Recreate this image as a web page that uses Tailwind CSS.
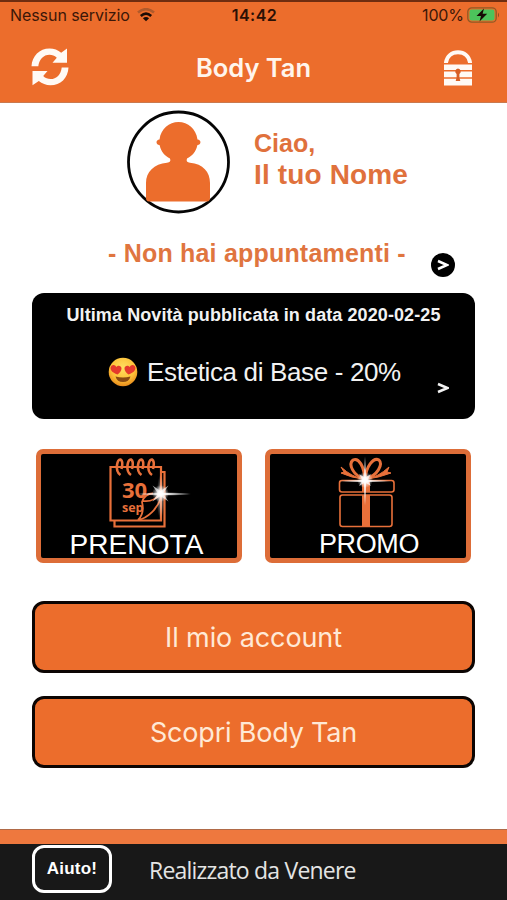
<!DOCTYPE html>
<html lang="it">
<head>
<meta charset="utf-8">
<title>Body Tan</title>
<script src="https://cdn.jsdelivr.net/npm/@tailwindcss/browser@4"></script>
</head>
<body class="bg-white">
<div class="w-[507px] h-[900px] flex flex-col overflow-hidden bg-white font-['Liberation_Sans',sans-serif] whitespace-nowrap">
  <header class="h-[103px] shrink-0 bg-[#ec6d2c] border-t-2 border-t-[#6f2d10] border-b border-b-[#c9794f] font-['Inter',sans-serif]">
    <div class="h-[26px] grid grid-cols-3 items-center pl-[10px] pr-[7px] text-[#3b1708] text-[16px] leading-none">
      <div class="flex items-center gap-[7px]">
        <span class="tracking-[-0.07px]">Nessun servizio</span>
        <svg width="18" height="14" viewBox="0 0 18 14" fill="none" stroke-width="2.6">
          <path d="M1 4.6Q9-2.2 17 4.6" stroke="#b05a2b"/>
          <path d="M3.8 8Q9 3.4 14.2 8" stroke="#1c0c05"/>
          <path d="M9 13.2L5.9 10.2Q9 7.8 12.1 10.2Z" fill="#1c0c05"/>
        </svg>
      </div>
      <span class="text-center font-semibold text-[#2a1005] tracking-[0.5px] -ml-[1px]">14:42</span>
      <div class="flex items-center justify-end gap-[3px]">
        <span class="tracking-[-0.1px]">100%</span>
        <svg width="33" height="16" viewBox="0 0 33 16">
          <rect x=".8" y=".8" width="28.4" height="14.4" rx="4" fill="none" stroke="#8f5a25" stroke-width="1.3"/>
          <rect x="2.5" y="2.5" width="25" height="11" rx="2.3" fill="#4cc35b"/>
          <path d="M17 1.5L9.5 9H14L12.5 14.5L20.2 6.8H15.6Z" fill="#160b05"/>
          <path d="M31 5.5Q33 8 31 10.5Z" fill="#8f4a22"/>
        </svg>
      </div>
    </div>
    <div class="h-[74px] flex items-center justify-between pl-[31px] pr-[34px]">
      <svg class="mt-[4px]" width="38" height="38" viewBox="0 0 38 38" fill="#fffaf5">
        <path d="M.5 18.3C1 8 8.500 .5 18.500 .5C23 .5 27 2 30.200 4.700L36 .5V14.800H21.500L25.800 9.700C23.500 7.500 21.300 6.700 18.500 6.700C12.500 6.700 8 11.500 7.300 18.300Z"/>
        <path d="M37.500 19.400C37 30 29.500 37.300 19.500 37.300C15 37.300 11 35.800 7.800 33.100L1.500 37.300V23H16.500L12.200 28.100C14.500 30.300 16.700 31.100 19.500 31.100C25.500 31.100 30 26.200 30.700 19.400Z"/>
      </svg>
      <h1 class="mt-[6px] mr-[5px] font-semibold text-[25.500px] leading-none text-[#fff5ec] tracking-[0px]">Body Tan</h1>
      <svg class="mt-[5px]" width="30" height="36" viewBox="0 0 30 36">
        <path d="M3 13V12.500C4 6 8.800 2.200 15 2.200S26 6 27 12.500V13" fill="none" stroke="#fffaf5" stroke-width="4"/>
        <path d="M1 14.500H29V20H1ZM1 21.500H29V27.300H1ZM1 28.800H29V35.500H1Z" fill="#fffaf5"/>
        <path d="M15 18.500A3 3 0 0 1 16.400 24V27.500L17.300 31H12.700L13.600 27.500V24A3 3 0 0 1 15 18.500Z" fill="#d85f25"/>
      </svg>
    </div>
  </header>

  <main class="flex-1 flex flex-col">
    <section class="mt-[7px] ml-[127px] flex items-center gap-[24px]">
      <svg width="103" height="104" viewBox="0 0 103 104">
        <circle cx="51.500" cy="52" r="50" fill="#fff" stroke="#050505" stroke-width="2.800"/>
        <path d="M51.500 12C61 12 69 18.500 70.500 29.500C74.500 30 74.500 34.500 70.300 35.300C69 42 65 46 60 48.500C59 51 60 52.500 63 52.800C76 54 83 62 83 73V88C83 90 82 91.500 80 91.500H22C20 91.500 19 90 19 88V73C19 62 27 54 40 52.800C43 52.500 44 51 43 48.500C38 46 34 42 32.700 35.300C28.500 34.500 28.500 30 32.500 29.500C34 18.500 42 12 51.500 12Z" fill="#ec6d2c"/>
      </svg>
      <div class="font-bold text-[#e0713c] leading-[31px] pb-[7px]">
        <p class="text-[25px] tracking-[0px]">Ciao,</p>
        <p class="text-[28px] tracking-[0.150px]">Il tuo Nome</p>
      </div>
    </section>

    <section class="mt-[26px] h-[37px] flex justify-between pl-[108px] pr-[52px]">
      <p class="font-bold text-[25px] leading-[26px] text-[#e0753f] tracking-[0.2px]">- Non hai appuntamenti -</p>
      <span class="mt-[13px] size-[24px] rounded-full bg-black flex items-center justify-center">
        <svg width="12" height="12" viewBox="0 0 12 12" fill="none" stroke="#fff" stroke-width="2.500"><path d="M1 2L10 6L1 10"/></svg>
      </span>
    </section>

    <section class="mt-[16px] mx-[32px] h-[126px] rounded-[12px] bg-black text-[#f2f2f2] flex flex-col relative">
      <h2 class="mt-[12px] text-center font-bold text-[18px] leading-[20px] tracking-[0.090px]">Ultima Novità pubblicata in data 2020-02-25</h2>
      <div class="mt-[32px] ml-[76px] flex items-center gap-[9px] h-[30px]">
        <svg width="30" height="30" viewBox="0 0 30 30">
          <defs><radialGradient id="face" cx=".5" cy=".35" r=".65"><stop offset="0" stop-color="#ffe061"/><stop offset=".65" stop-color="#fdc037"/><stop offset="1" stop-color="#e88a1b"/></radialGradient></defs>
          <circle cx="15" cy="15" r="14.300" fill="url(#face)"/>
          <path d="M7.500 19.500Q15 21.500 22.500 19.500Q21 25 15 25T7.500 19.500Z" fill="#8a4a12"/>
          <path d="M9.500 17.500C4 15.500 1.500 12.500 3 9.500C4.500 7 7.500 7.700 8.300 10C10 7.700 13.300 8.500 13.500 11.300C13.600 13.700 11.700 16 9.500 17.500Z" fill="#e53a2c"/>
          <path d="M20.500 17.500C26 15.500 28.500 12.500 27 9.500C25.500 7 22.500 7.700 21.700 10C20 7.700 16.700 8.500 16.500 11.300C16.400 13.700 18.300 16 20.500 17.500Z" fill="#e53a2c"/>
        </svg>
        <p class="text-[26px] leading-none tracking-[-0.350px]">Estetica di Base - 20%</p>
      </div>
      <svg class="absolute right-[26px] bottom-[25px]" width="12" height="12" viewBox="0 0 12 12" fill="none" stroke="#f2f2f2" stroke-width="2.500"><path d="M1 2L10.500 6L1 10"/></svg>
    </section>

    <section class="mt-[30px] ml-[36px] flex gap-[23px]">
      <a class="w-[206px] h-[114px] rounded-[7px] border-[5px] border-[#dd6d38] bg-black flex flex-col items-center">
        <svg class="shrink-0" width="196" height="76" viewBox="0 0 196 76" fill="none">
          <defs>
            <radialGradient id="glow"><stop offset="0" stop-color="#fff"/><stop offset=".3" stop-color="#fff" stop-opacity=".9"/><stop offset="1" stop-color="#fff" stop-opacity="0"/></radialGradient>
          </defs>
          <g stroke="#e8703a">
            <path d="M69.500 13H120V66.500H69.500ZM73.500 67V72.500H123.500V18H121" stroke-width="2.200"/>
            <path d="M97 66C107 64 116 55 120 44M97 66C103 60 102 52 101 48C103 42 107 39.500 112 39.500M102 47C109 48 115 45 119 40C120 34 120 30 120 25" stroke-width="1.800"/>
            <path d="M79.500 21Q75 18 76 11Q77 5 79.500 5.500Q82.500 7 80.500 15M90 21Q85.500 18 86.500 11Q87.500 5 90 5.500Q93 7 91 15M100.500 21Q96 18 97 11Q98 5 100.500 5.500Q103.500 7 101.500 15M111 21Q106.500 18 107.500 11Q108.500 5 111 5.500Q114 7 112 15" stroke-width="2.600"/>
          </g>
          <text x="81" y="43.500" font-family="Open Sans, sans-serif" font-weight="700" font-size="22" fill="#e8703a">30</text>
          <text x="81" y="57.500" font-family="Open Sans, sans-serif" font-weight="700" font-size="12.500" fill="#e8703a">sep</text>
          <ellipse cx="119.500" cy="43" rx="4" ry="22" fill="url(#glow)" opacity=".5"/>
          <ellipse cx="123" cy="40" rx="28" ry="1.800" fill="url(#glow)"/>
          <circle cx="119.500" cy="39.500" r="8.500" fill="url(#glow)"/>
          <path d="M119.500 39.500m-8-8l8 5.500 8-5.500-5.500 8 5.500 8-8-5.500-8 5.500 5.500-8Z" fill="#fff" opacity=".65"/>
        </svg>
        <span class="text-white text-[28px] leading-[30px] tracking-[0.100px] mr-[5px]">PRENOTA</span>
      </a>
      <a class="w-[206px] h-[114px] rounded-[7px] border-[5px] border-[#dd6d38] bg-black flex flex-col items-center">
        <svg class="shrink-0" width="196" height="76" viewBox="0 0 196 76" fill="none" stroke="#e8703a">
          <g stroke-width="1.600">
            <rect x="69.500" y="26.500" width="54.500" height="11.500" rx="2.500"/>
            <rect x="70" y="41" width="52" height="31.500" rx="2.500"/>
          </g>
          <path d="M92 27H100V38H92ZM92 41H100V72H92Z" fill="#e8703a" stroke="none"/>
          <path d="M95 25C83 22 78 10 83 6C89 3 94 13 95 25C96 13 103 3 109 6C113 10 108 22 95 25Z" stroke-width="3"/>
          <path d="M93 25Q82 23 71 13L74 18L71 19Q82 24 93 25ZM97 25Q108 23 119 13L117 18L121 19Q108 24 97 25Z" fill="#e8703a" stroke-width="1"/>
          <g stroke="none">
            <ellipse cx="95" cy="27" rx="1.600" ry="26" fill="url(#glow)"/>
            <ellipse cx="95" cy="27" rx="27" ry="1.500" fill="url(#glow)"/>
            <circle cx="95" cy="26" r="8" fill="url(#glow)"/>
            <path d="M95 26m-6-6l6 3.500 6-3.500-3.500 6 3.500 6-6-3.500-6 3.500 3.500-6Z" fill="#fff" opacity=".7"/>
          </g>
        </svg>
        <span class="text-white text-[27px] leading-[28px] tracking-[-0.400px] ml-[2px]">PROMO</span>
      </a>
    </section>

    <nav class="mt-[38px] mx-[32px] flex flex-col gap-[23px] font-['Inter',sans-serif] text-[27px] text-[#ffe9d6]">
      <a class="h-[72px] rounded-[12px] border-[3px] border-[#0c0503] bg-[#ec6d2c] flex items-center justify-center tracking-[-0.100px] pt-[2px]">Il mio account</a>
      <a class="h-[72px] rounded-[12px] border-[3px] border-[#0c0503] bg-[#ec6d2c] flex items-center justify-center tracking-[-0.200px] pt-[2px]">Scopri Body Tan</a>
    </nav>
  </main>

  <footer class="h-[71px] shrink-0 bg-[#181818] border-t border-t-[#b06a48]">
    <div class="h-[14px] bg-[#ee783e]"></div>
    <div class="flex items-center gap-[37px] pl-[32px] pt-[1px]">
      <a class="w-[80px] h-[48px] rounded-[12px] border-[3px] border-white flex items-center justify-center text-white font-bold text-[17px] tracking-[0.200px]">Aiuto!</a>
      <span class="mt-[2px] font-['Open_Sans',sans-serif] text-[23px] tracking-[-0.800px] text-[#e4e4e4]">Realizzato da Venere</span>
    </div>
  </footer>
</div>
</body>
</html>
